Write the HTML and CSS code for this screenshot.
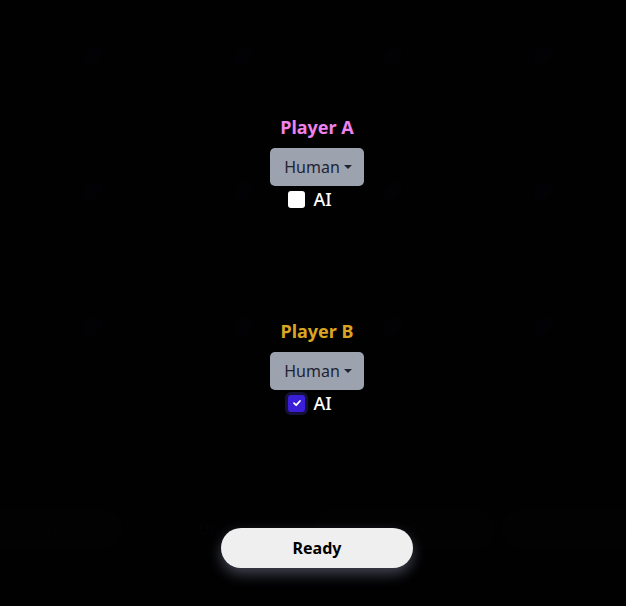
FILE: index.html
```html
<!DOCTYPE html>
<html lang="en">
<head>
<meta charset="utf-8">
<title>Game setup</title>
<link rel="stylesheet" href="styles.css">
</head>
<body>
<div class="game">
  <div class="board">
    <span class="dot"></span><span class="dot"></span><span class="dot"></span><span class="dot"></span>
    <span class="dot"></span><span class="dot"></span><span class="dot"></span><span class="dot"></span>
    <span class="dot"></span><span class="dot"></span><span class="dot"></span><span class="dot"></span>
  </div>
  <div class="controls">
    <button class="ctl ctl-wide">New Game</button>
    <button class="ctl">Undo</button>
    <button class="ctl">Undo</button>
    <button class="ctl">Build Board</button>
  </div>
</div>
<div class="overlay">
  <section class="player">
    <h2 class="title title-a">Player A</h2>
    <button class="select">Human<span class="caret"></span></button>
    <label class="ai"><span class="box"></span>AI</label>
  </section>
  <section class="player">
    <h2 class="title title-b">Player B</h2>
    <button class="select">Human<span class="caret"></span></button>
    <label class="ai"><span class="box box-on"><svg width="10" height="10" viewBox="0 0 10 10"><path d="M2 5.2 L4.2 7.2 L8 3" fill="none" stroke="#fff" stroke-width="1.8" stroke-linecap="round" stroke-linejoin="round"/></svg></span>AI</label>
  </section>
  <button class="ready">Ready</button>
</div>
</body>
</html>
```
FILE: styles.css
```css
* { box-sizing: border-box; }
html, body { margin: 0; height: 100%; }
body {
  background: #030305;
  font-family: "Noto Sans", "Open Sans", sans-serif;
  overflow: hidden;
  position: relative;
}
.game {
  position: absolute;
  inset: 0;
}
.board {
  display: grid;
  grid-template-columns: repeat(4, 150px);
  grid-auto-rows: 135px;
  padding: 0 0 0 18px;
  margin-top: -12px;
}
.dot {
  align-self: center;
  justify-self: center;
  width: 14px;
  height: 14px;
  background: #05050a;
  transform: rotate(45deg) scaleY(1.4);
}
.controls {
  position: absolute;
  left: -40px;
  top: 509px;
  display: flex;
  gap: 6px;
}
.ctl {
  height: 40px;
  width: 160px;
  border: 0;
  border-radius: 20px;
  background: #050507;
  color: #08080a;
  font: 700 16px "Noto Sans", sans-serif;
}
.ctl:nth-child(2) { width: 180px; background: #040406; }
.ctl:nth-child(3) { width: 180px; }
.ctl-wide { width: 163px; padding-right: 30px; }
.overlay {
  position: absolute;
  inset: 0;
  background: rgba(0, 0, 0, 0.6);
  display: flex;
  flex-direction: column;
  align-items: center;
  padding-top: 114px;
  padding-left: 8px;
}
.player {
  height: 204px;
  display: flex;
  flex-direction: column;
  align-items: center;
}
.title {
  margin: 0;
  line-height: 26px;
  font-size: 18px;
  font-weight: 700;
}
.title-a { color: #ee82ee; }
.title-b { color: #daa520; }
.select {
  margin-top: 8px;
  height: 38px;
  width: 94px;
  border: 0;
  border-radius: 5px;
  background: #9ca3af;
  color: #1f2433;
  font: 400 16px "Noto Sans", sans-serif;
  display: flex;
  align-items: center;
  justify-content: center;
  padding: 0 0 0 2px;
}
.caret {
  margin-left: 4px;
  width: 0;
  height: 0;
  border-left: 4px solid transparent;
  border-right: 4px solid transparent;
  border-top: 4px solid #1f2433;
}
.ai {
  height: 26px;
  display: flex;
  align-items: center;
  gap: 8px;
  color: #ffffff;
  font-size: 18px;
  font-weight: 500;
  margin-right: 14px;
}
.box {
  width: 17px;
  height: 17px;
  border-radius: 3px;
  background: #ffffff;
  display: flex;
  align-items: center;
  justify-content: center;
}
.box-on {
  background: #3a1fd8;
  box-shadow: 0 0 0 3px #14113a;
}
.ready {
  margin-top: 6px;
  width: 192px;
  height: 40px;
  border: 0;
  border-radius: 20px;
  background: #efefef;
  color: #000;
  font: 700 16px "Noto Sans", sans-serif;
  box-shadow: 0 6px 14px rgba(190, 195, 230, 0.35);
}
```
